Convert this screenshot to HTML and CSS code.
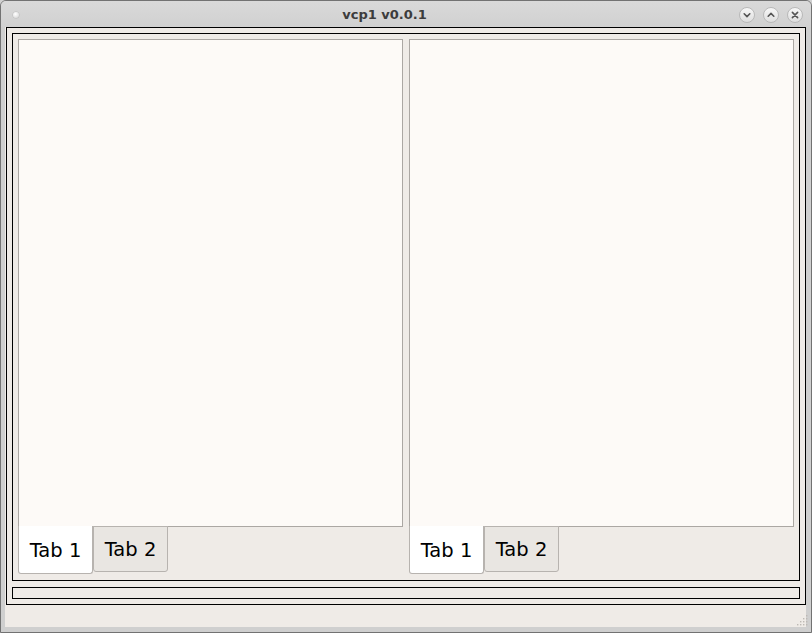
FILE: index.html
```html
<!DOCTYPE html>
<html>
<head>
<meta charset="utf-8">
<link rel="stylesheet" href="styles.css">
</head>
<body>
<div class="window">
  <div class="titlebar">
    <div class="tb-left"><span class="tb-dot"></span></div>
    <div class="title">vcp1 v0.0.1</div>
    <div class="tb-buttons">
      <span class="tb-btn"><svg width="16" height="16" viewBox="0 0 16 16"><path d="M5.2 6.8 L8 9.6 L10.8 6.8" fill="none" stroke="#555" stroke-width="1.6" stroke-linecap="round" stroke-linejoin="round"/></svg></span>
      <span class="tb-btn"><svg width="16" height="16" viewBox="0 0 16 16"><path d="M5.2 9.2 L8 6.4 L10.8 9.2" fill="none" stroke="#555" stroke-width="1.6" stroke-linecap="round" stroke-linejoin="round"/></svg></span>
      <span class="tb-btn"><svg width="16" height="16" viewBox="0 0 16 16"><path d="M5.4 5.4 L10.6 10.6 M10.6 5.4 L5.4 10.6" fill="none" stroke="#555" stroke-width="1.6" stroke-linecap="round"/></svg></span>
    </div>
  </div>
  <div class="frame">
    <div class="outer">
      <div class="inner">
        <div class="tabwidget">
          <div class="pane"></div>
          <div class="tabs">
            <div class="tab active">Tab 1</div>
            <div class="tab">Tab 2</div>
          </div>
        </div>
        <div class="tabwidget">
          <div class="pane"></div>
          <div class="tabs">
            <div class="tab active">Tab 1</div>
            <div class="tab">Tab 2</div>
          </div>
        </div>
      </div>
      <div class="status"></div>
    </div>
  </div>
  <svg class="grip" width="14" height="14" viewBox="0 0 14 14">
    <g fill="#bdb9b5">
      <rect x="11" y="2" width="1.4" height="1.4"/>
      <rect x="8" y="5" width="1.4" height="1.4"/><rect x="11" y="5" width="1.4" height="1.4"/>
      <rect x="5" y="8" width="1.4" height="1.4"/><rect x="8" y="8" width="1.4" height="1.4"/><rect x="11" y="8" width="1.4" height="1.4"/>
      <rect x="2" y="11" width="1.4" height="1.4"/><rect x="5" y="11" width="1.4" height="1.4"/><rect x="8" y="11" width="1.4" height="1.4"/><rect x="11" y="11" width="1.4" height="1.4"/>
    </g>
  </svg>
</div>
</body>
</html>
```

FILE: styles.css
```css
html, body {
  margin: 0;
  padding: 0;
  background: #d0d0d0;
}
body {
  width: 812px;
  height: 633px;
  overflow: hidden;
  font-family: "DejaVu Sans", "Liberation Sans", sans-serif;
}
.window {
  position: relative;
  box-sizing: border-box;
  width: 812px;
  height: 633px;
  border: 1px solid #727272;
  border-radius: 6px 6px 0 0;
  background: #cfcfcf;
  display: flex;
  flex-direction: column;
}
.titlebar {
  height: 26px;
  display: flex;
  align-items: center;
  background: linear-gradient(#d9d9d9, #d1d1d1);
  border-radius: 5px 5px 0 0;
}
.tb-left {
  width: 29px;
  height: 26px;
  display: flex;
  align-items: center;
}
.tb-dot {
  display: block;
  width: 6px;
  height: 6px;
  margin-left: 12px;
  margin-top: 1px;
  border-radius: 50%;
  background: radial-gradient(circle at 40% 35%, #ffffff, #e4e4e4 60%, #c4c4c4);
  box-shadow: 0 0 0 0.5px #bcbcbc;
}
.title {
  flex: 1;
  text-align: center;
  font-weight: bold;
  font-size: 13px;
  color: #3c3c3c;
  line-height: 26px;
  padding-top: 2px;
}
.tb-buttons {
  width: 72px;
  display: flex;
  gap: 8px;
  padding-top: 2px;
}
.tb-btn {
  box-sizing: border-box;
  width: 16px;
  height: 16px;
  border-radius: 50%;
  border: 1px solid #b9b9b9;
  background: linear-gradient(#f7f7f7, #dedede);
  display: flex;
  align-items: center;
  justify-content: center;
}
.tb-btn svg {
  flex: none;
  margin: -1px;
}
.frame {
  flex: 1;
  margin: 0 5px 5px 4px;
  background: #efebe7;
  padding-left: 1px;
}
.outer {
  box-sizing: border-box;
  height: 578px;
  border: 1px solid #000;
  padding: 5px;
  display: flex;
  flex-direction: column;
  gap: 6px;
}
.inner {
  flex: 1;
  border: 1px solid #000;
  padding: 5px;
  display: flex;
  gap: 6px;
}
.status {
  box-sizing: border-box;
  height: 12px;
  border: 1px solid #000;
}
.tabwidget {
  width: 385px;
  display: flex;
  flex-direction: column;
}
.pane {
  box-sizing: border-box;
  height: 488px;
  border: 1px solid #aba7a3;
  background: #fdfaf7;
}
.tabs {
  display: flex;
  align-items: flex-start;
  margin-top: -1px;
  height: 48px;
}
.tab {
  box-sizing: border-box;
  width: 75px;
  height: 46px;
  border: 1px solid #b7b3af;
  border-radius: 0 0 3px 3px;
  background: #e9e6e2;
  display: flex;
  align-items: center;
  justify-content: center;
  font-size: 19.5px;
  color: #000;
}
.tab.active {
  height: 48px;
  border-top: none;
  background: #ffffff;
  padding-top: 2px;
}
.grip {
  position: absolute;
  right: 2px;
  bottom: 5px;
}
```
